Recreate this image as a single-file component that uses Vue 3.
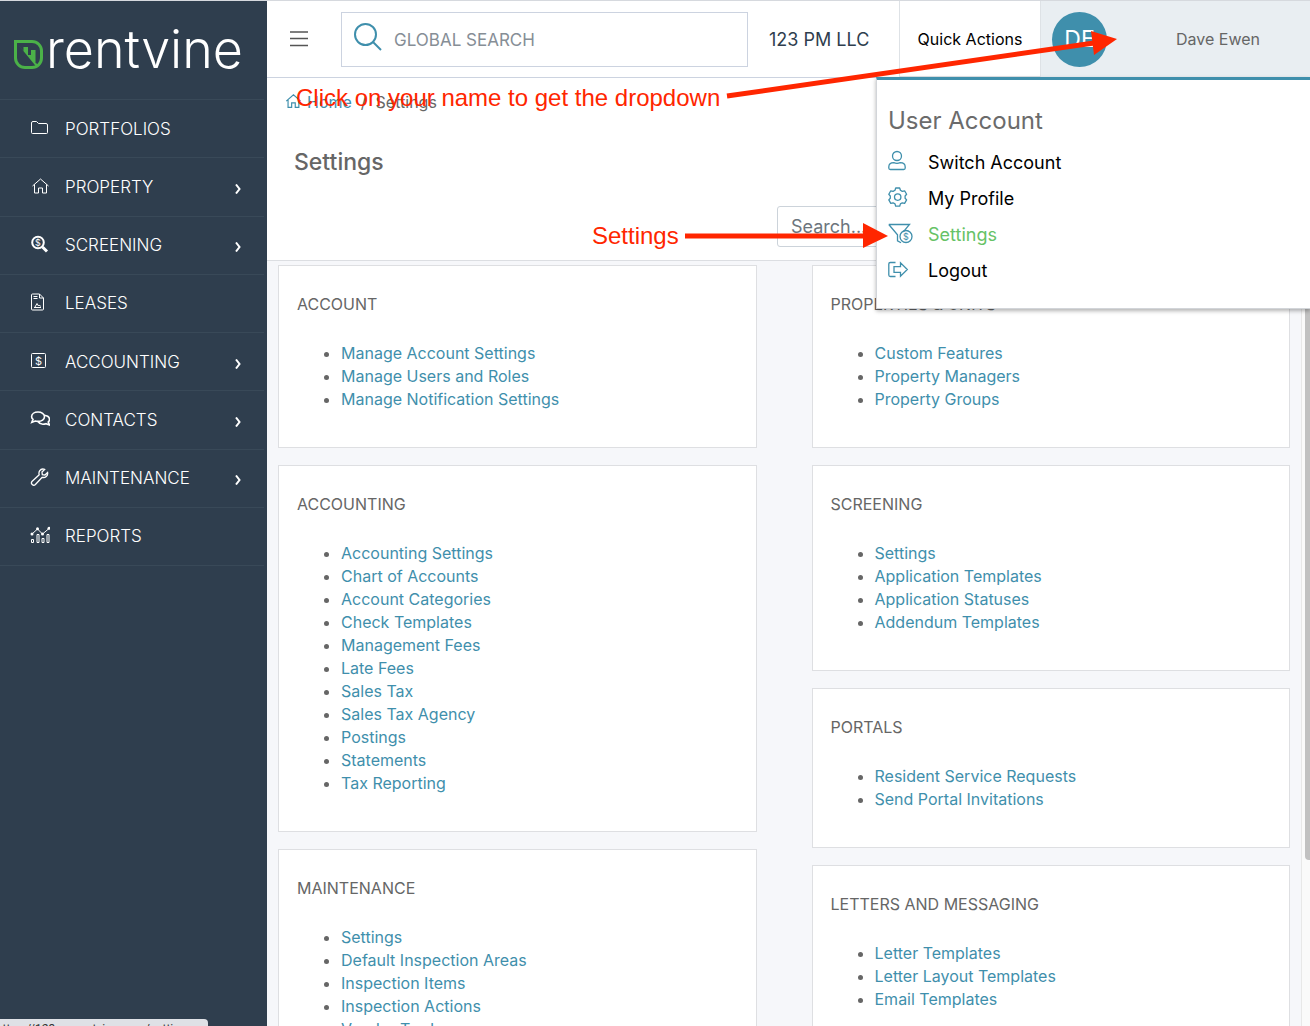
<script setup>
import { ref } from 'vue'

const globalSearch = ref('')
const pageSearch = ref('')

const menu = [
  { label: 'PORTFOLIOS', icon: 'folder' },
  { label: 'PROPERTY', icon: 'home', children: true },
  { label: 'SCREENING', icon: 'screening', children: true },
  { label: 'LEASES', icon: 'lease' },
  { label: 'ACCOUNTING', icon: 'accounting', children: true },
  { label: 'CONTACTS', icon: 'contacts', children: true },
  { label: 'MAINTENANCE', icon: 'wrench', children: true },
  { label: 'REPORTS', icon: 'reports' },
]

const userMenu = [
  { label: 'Switch Account', icon: 'user' },
  { label: 'My Profile', icon: 'gear' },
  { label: 'Settings', icon: 'funnel', active: true },
  { label: 'Logout', icon: 'logout' },
]

const columns = [
  [
    {
      title: 'ACCOUNT',
      links: ['Manage Account Settings', 'Manage Users and Roles', 'Manage Notification Settings'],
    },
    {
      title: 'ACCOUNTING',
      links: [
        'Accounting Settings',
        'Chart of Accounts',
        'Account Categories',
        'Check Templates',
        'Management Fees',
        'Late Fees',
        'Sales Tax',
        'Sales Tax Agency',
        'Postings',
        'Statements',
        'Tax Reporting',
      ],
    },
    {
      title: 'MAINTENANCE',
      links: [
        'Settings',
        'Default Inspection Areas',
        'Inspection Items',
        'Inspection Actions',
        'Vendor Trades',
      ],
    },
  ],
  [
    {
      title: 'PROPERTIES & UNITS',
      links: ['Custom Features', 'Property Managers', 'Property Groups'],
    },
    {
      title: 'SCREENING',
      links: ['Settings', 'Application Templates', 'Application Statuses', 'Addendum Templates'],
    },
    {
      title: 'PORTALS',
      links: ['Resident Service Requests', 'Send Portal Invitations'],
    },
    {
      title: 'LETTERS AND MESSAGING',
      links: ['Letter Templates', 'Letter Layout Templates', 'Email Templates'],
    },
  ],
]

// 20x20 sidebar icons
const icons = {
  folder: '<path d="M1.500 13.500V4A1.500 1.500 0 0 1 3 2.500h3.500l2 2H16A1.500 1.500 0 0 1 17.500 6v7.500a1 1 0 0 1-1 1h-14a1 1 0 0 1-1-1z"/>',
  home: '<path d="M2.500 9 10.500 2l8 7M4.500 7.500V16h4v-5h4v5h4V7.500"/>',
  screening:
    '<circle cx="8" cy="7.500" r="5.800" stroke-width="2"/><path d="m12.500 12 4.500 4.500" stroke-width="3"/><text x="8" y="11" font-size="9" font-weight="400" text-anchor="middle" stroke="none" fill="currentColor">$</text>',
  lease:
    '<path d="M2.500 1h7L13.500 5v11a1 1 0 0 1-1 1h-10a1 1 0 0 1-1-1V2a1 1 0 0 1 1-1zM9.500 1v4h4M3.500 3.500h4M3.500 5.500h4M4 14.500h7M5 14l2-3.500 1.500 2.500 1-1 1 1.500"/>',
  accounting:
    '<rect x="1.500" y="1.500" width="14" height="14" rx="1"/><text x="8.500" y="12.500" font-size="11" font-weight="400" text-anchor="middle" stroke="none" fill="currentColor">$</text>',
  contacts:
    '<g stroke-width="1.600"><path d="M8 2c3.600 0 6.500 2 6.500 4.700s-2.900 4.700-6.500 4.700c-1 0-1.900-.1-2.700-.4L1.800 12.300 3 9.400C2.100 8.600 1.600 7.700 1.600 6.700 1.600 4 4.400 2 8 2z"/><path d="M14.300 5.200c3 .4 5.200 2 5.200 4.200 0 1-.5 1.900-1.300 2.600l1.300 2.900-3.600-1.200c-3 .9-6.300.2-7.700-2"/></g>',
  wrench:
    '<path stroke-width="1.300" d="M17.600 4.500 15 7l-2.700-.4L12 4l2.600-2.600c-2-.8-4 0-5 1.500-.7 1.200-.8 2.600-.4 3.800l-7 6.600a2.200 2.200 0 0 0 3.200 3.200l6.800-7.200c3 .9 6-1.600 5.400-4.800z"/>',
  reports:
    '<path d="M1.500 13.500h2v3h-2zM7 8.500h2v8H7zM12 12.500h2v4h-2zM17 8.500h2v8h-2zM2 8l5.500-5 5 5L19 2.500"/><g fill="currentColor" stroke="none"><circle cx="2" cy="8" r="1.500"/><circle cx="7.500" cy="2.700" r="1.500"/><circle cx="12.500" cy="8" r="1.500"/><circle cx="19" cy="2.300" r="1.500"/></g>',
}

// 26x24 icons of the account dropdown
const userIcons = {
  user: '<circle cx="9" cy="6" r="4.500"/><path d="M.8 18v-1c0-3 2.400-4.300 5-4.300 1.400.6 5 .6 6.400 0 2.600 0 5 1.300 5 4.300v1c0 1-.5 1.500-1.500 1.500H2.300C1.300 19.500.8 19 .8 18z"/>',
  gear: '<path d="M7.700 2h4l.7 2.300 1.900 1.100 2.300-.6 2 3.500-1.500 1.700v2.200l1.500 1.700-2 3.500-2.300-.6-1.900 1.100-.7 2.300h-4L7 17.900l-1.900-1.100-2.300.6-2-3.500 1.500-1.700V10L.8 8.300l2-3.500 2.300.6L7 4.300z" stroke-linejoin="round"/><circle cx="9.700" cy="11.100" r="3.200"/>',
  funnel:
    '<path d="M.8 2.500h20.700l-6.200 7.300M.8 2.500l8.700 10.300v6l3.500 2"/><circle cx="18" cy="14.500" r="6"/><text x="18" y="18" font-size="9" text-anchor="middle" stroke="none" fill="currentColor">$</text>',
  logout:
    '<path d="M7.500 4.500H2.300C1.300 4.500.8 5 .8 6v11c0 1 .5 1.500 1.500 1.500h5.200M6 8.700h6.500V4.800l6.800 6.700-6.800 6.700v-3.900H6z"/>',
}
</script>

<template>
  <div class="app-shell">
    <aside class="sidebar">
      <a href="#" class="brand" aria-label="rentvine">
        <svg class="brand-leaf" viewBox="0 0 29 29" aria-hidden="true">
          <path d="M1.500 1.500H18a9.500 9.500 0 0 1 9.500 9.500v7a9.500 9.500 0 0 1-9.500 9.500h-7A9.500 9.500 0 0 1 1.500 18z" class="leaf-outline" />
          <path d="M2 2 9.500 11V7H14v8h3v-5h4.500v13l4 2-3 2z" class="leaf-fill" />
        </svg>
        <span class="brand-name">rentvine</span>
      </a>
      <nav class="side-nav">
        <a v-for="item in menu" :key="item.label" href="#" class="side-link">
          <svg class="side-icon" viewBox="0 0 20 20" aria-hidden="true" v-html="icons[item.icon]"></svg>
          <span class="side-label">{{ item.label }}</span>
          <svg v-if="item.children" class="chevron" viewBox="0 0 6 10" aria-hidden="true">
            <path d="M1 .5 4.500 5 1 9.500" />
          </svg>
        </a>
      </nav>
    </aside>

    <div class="page">
      <header class="top-bar">
        <button type="button" class="menu-toggle" aria-label="Toggle menu">
          <svg viewBox="0 0 20 16" aria-hidden="true">
            <path d="M1 1h18M1 7.500h18M1 14.500h18" />
          </svg>
        </button>
        <label class="global-search">
          <svg viewBox="0 0 28 28" aria-hidden="true">
            <circle cx="11.500" cy="11.500" r="10.500" />
            <path d="m18.500 18.500 8.500 8.500" />
          </svg>
          <input v-model="globalSearch" type="text" placeholder="GLOBAL SEARCH" aria-label="Global search" />
        </label>
        <span class="company">123 PM LLC</span>
        <button type="button" class="quick-actions">Quick Actions</button>
        <div class="user-area">
          <button type="button" class="user-toggle">
            <span class="avatar">DE</span>
            <span class="user-name">Dave Ewen</span>
          </button>
          <div class="user-menu">
            <h2>User Account</h2>
            <a
              v-for="item in userMenu"
              :key="item.label"
              href="#"
              class="user-link"
              :class="{ active: item.active }"
            >
              <svg viewBox="0 0 26 24" aria-hidden="true" v-html="userIcons[item.icon]"></svg>
              <span>{{ item.label }}</span>
            </a>
          </div>
        </div>
      </header>

      <section class="page-head">
        <nav class="breadcrumb" aria-label="Breadcrumb">
          <a href="#">
            <svg viewBox="0 0 20 20" aria-hidden="true" v-html="icons.home"></svg>
            Home
          </a>
          <span>/</span>
          <span>Settings</span>
        </nav>
        <h1>Settings</h1>
        <div class="page-tools">
          <input v-model="pageSearch" type="text" class="page-search" placeholder="Search..." aria-label="Search settings" />
        </div>
      </section>

      <div class="page-body">
        <main class="settings">
          <div v-for="(column, index) in columns" :key="index" class="settings-column">
            <section v-for="card in column" :key="card.title" class="card">
              <h3>{{ card.title }}</h3>
              <ul>
                <li v-for="link in card.links" :key="link">
                  <a href="#">{{ link }}</a>
                </li>
              </ul>
            </section>
          </div>
        </main>
        <div class="scroll-track">
          <div class="scroll-thumb"></div>
        </div>
      </div>
    </div>

    <div class="status-url">https://123pm.rentvine.com/settings</div>

    <svg class="annotations" aria-hidden="true">
      <text x="296" y="106">Click on your name to get the dropdown</text>
      <path d="M727 96 1094 43" />
      <polygon points="1091,31 1117,39 1094,55" />
      <text x="592" y="244">Settings</text>
      <path d="M685 236H866" />
      <polygon points="863,223 888,236 863,248" />
    </svg>
  </div>
</template>

<style>
body {
  overflow: hidden;
}
</style>

<style scoped>
.app-shell {
  position: relative;
  display: flex;
  height: 100vh;
  overflow: hidden;
  box-sizing: border-box;
  border-top: 1px solid #d6d9de;
  background: #ffffff;
  color: #666666;
  font-family: Inter, 'Open Sans', sans-serif;
  font-size: 16px;
}

.app-shell *,
.app-shell *::before {
  box-sizing: border-box;
}

a {
  color: #3f8fac;
  text-decoration: none;
}

button,
input {
  font-family: inherit;
}

svg {
  flex: none;
  fill: none;
  stroke: currentColor;
}

.sidebar {
  flex: 0 0 267px;
  background: #2f3e4e;
  color: #ffffff;
}

.brand {
  display: flex;
  align-items: center;
  gap: 3px;
  height: 98px;
  padding-left: 14px;
  color: #ffffff;
}

.brand-leaf {
  width: 29px;
  height: 29px;
  margin-top: 8px;
}

.leaf-outline {
  stroke: #4bb148;
  stroke-width: 3;
}

.leaf-fill {
  fill: #4bb148;
  stroke: none;
}

.brand-name {
  font-size: 52px;
  font-weight: 300;
  line-height: 60px;
}

.side-nav {
  display: grid;
  grid-auto-rows: 1fr;
  height: 467px;
  margin-right: 3px;
  border-top: 1px solid #394958;
}

.side-link {
  display: flex;
  align-items: center;
  padding: 0 23px 0 30px;
  border-bottom: 1px solid #394958;
  color: #ffffff;
  font-size: 17px;
  font-weight: 300;
}

.side-icon {
  width: 20px;
  height: 20px;
  margin-right: 15px;
}

.side-label {
  flex: 1;
}

.chevron {
  width: 6px;
  height: 10px;
  margin-top: 4px;
  stroke-width: 2;
}

.page {
  display: flex;
  flex: 1;
  flex-direction: column;
  min-width: 0;
}

.top-bar {
  display: flex;
  align-items: center;
  flex: 0 0 77px;
  border-bottom: 1px solid #ccd3e0;
}

.menu-toggle {
  margin: 0 32px 0 22px;
  padding: 0;
  border: 0;
  background: transparent;
  color: #555555;
}

.menu-toggle svg {
  display: block;
  width: 20px;
  height: 16px;
  stroke-width: 1.4;
}

.global-search {
  display: flex;
  align-items: center;
  flex: 1;
  min-width: 0;
  height: 55px;
  margin-right: 21px;
  padding-left: 12px;
  border: 1px solid #ccd3e0;
}

.global-search svg {
  width: 28px;
  height: 28px;
  margin-bottom: 4px;
  color: #3f8fac;
  stroke-width: 2;
}

.global-search input {
  flex: 1;
  min-width: 0;
  padding: 2px 12px 0;
  border: 0;
  outline: none;
  background: transparent;
  font-size: 17px;
}

input::placeholder {
  color: #868e96;
  opacity: 1;
}

.company {
  width: 130px;
  color: #2f3e4e;
  font-size: 18px;
  white-space: nowrap;
}

.quick-actions {
  align-self: stretch;
  width: 142px;
  padding: 0;
  border: 1px solid #dee2e6;
  border-top: 0;
  background: #ffffff;
  color: #000000;
  font-size: 16px;
  white-space: nowrap;
}

.user-area {
  position: relative;
  align-self: stretch;
  width: 269px;
}

.user-toggle {
  display: flex;
  align-items: center;
  width: 100%;
  height: 100%;
  padding: 0 50px 0 11px;
  border: 0;
  background: #e9eef2;
  color: #666666;
  font-size: 16px;
}

.avatar {
  width: 55px;
  border-radius: 50%;
  background: #3f8fac;
  color: #ffffff;
  font-size: 23px;
  line-height: 55px;
}

.user-name {
  flex: 1;
  text-align: right;
}

.user-menu {
  position: absolute;
  top: 76px;
  right: 0;
  z-index: 2;
  width: 434px;
  padding: 24px 12px 20px 11px;
  border: 1px solid #d2d5d9;
  border-top: 3px solid #3f8fac;
  border-right: 0;
  background: #ffffff;
  box-shadow: 0 2px 4px rgba(0, 0, 0, 0.3);
}

.user-menu h2 {
  margin: 0 0 6px;
  color: #6b6b6b;
  font-size: 24px;
  font-weight: 400;
  line-height: 34px;
}

.user-link {
  display: flex;
  align-items: center;
  gap: 14px;
  height: 36px;
  color: #000000;
  font-size: 18px;
}

.user-link svg {
  width: 26px;
  height: 24px;
  color: #3f8fac;
  stroke-width: 1.3;
}

.user-link.active {
  color: #66c266;
}

.page-head {
  flex: 0 0 183px;
  padding: 12px 11px 0 17px;
  border-bottom: 1px solid #dcdee2;
}

.breadcrumb {
  display: flex;
  gap: 9px;
  font-size: 16px;
  line-height: 24px;
}

.breadcrumb a {
  display: flex;
  align-items: center;
  gap: 5px;
}

.breadcrumb svg {
  width: 18px;
  height: 18px;
  stroke-width: 1.3;
}

h1 {
  margin: 31px 0 0 10px;
  font-size: 23px;
  font-weight: 500;
  line-height: 34px;
}

.page-tools {
  display: flex;
  justify-content: flex-end;
  margin-top: 27px;
}

.page-search {
  width: 522px;
  height: 41px;
  padding: 0 13px;
  border: 1px solid #ccd3da;
  border-radius: 3px;
  outline: none;
  font-size: 18px;
}

.page-search::placeholder {
  color: #6c757d;
}

.page-body {
  display: flex;
  flex: 1;
  min-height: 0;
}

.settings {
  display: grid;
  grid-template-columns: 1fr 1fr;
  gap: 55px;
  flex: 1;
  min-width: 0;
  padding: 4px 11px 0;
  overflow: hidden;
  background: #f6f7fa;
}

.settings-column {
  display: flex;
  flex-direction: column;
  gap: 17px;
}

.card {
  padding: 27px 18px 36px;
  border: 1px solid #dedfe2;
  background: #ffffff;
}

.card h3 {
  margin: 0 0 26px;
  font-size: 16px;
  font-weight: 400;
  line-height: 23px;
}

.card ul {
  margin: 0;
  padding-left: 44px;
  line-height: 23px;
}

.scroll-track {
  flex: 0 0 9px;
  padding-left: 3px;
  border-left: 1px solid #e8e8e8;
  background: #fafafa;
}

.scroll-thumb {
  height: 599px;
  border-radius: 0 0 0 4px;
  background: #c1c1c1;
}

.status-url {
  position: absolute;
  bottom: 0;
  left: 0;
  width: 208px;
  height: 7px;
  overflow: hidden;
  border-radius: 0 4px 0 0;
  background: #dfe1e6;
  color: #333333;
  font-family: Roboto, sans-serif;
  font-size: 12px;
  line-height: 20px;
  text-indent: -4px;
  white-space: nowrap;
}

.annotations {
  position: absolute;
  top: -1px;
  left: 0;
  z-index: 3;
  width: 100%;
  height: 100%;
  pointer-events: none;
}

.annotations text {
  fill: #ff2600;
  stroke: none;
  font-family: 'Liberation Sans', Arial, sans-serif;
  font-size: 24px;
}

.annotations path {
  stroke: #ff2600;
  stroke-width: 5;
}

.annotations polygon {
  fill: #ff2600;
  stroke: none;
}
</style>
